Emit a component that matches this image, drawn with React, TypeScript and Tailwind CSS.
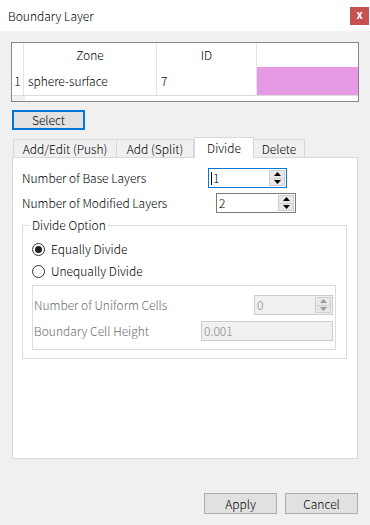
import React from "react";

const font = { fontFamily: '"Noto Sans CJK JP", "Noto Sans", sans-serif' };

function SpinBox({ value, focused, disabled, width }: { value: string; focused?: boolean; disabled?: boolean; width: string }) {
  const border = focused ? "border-[#0078d7]" : disabled ? "border-[#cccccc]" : "border-[#7a7a7a]";
  const bg = disabled ? "bg-[#f0f0f0] text-[#838383]" : "bg-white text-black";
  const arrow = disabled ? "#9a9a9a" : "#000";
  return (
    <div className={`flex h-[20px] border ${border} ${bg} ${width}`}>
      <div className="flex-1 flex items-center pl-[2px] leading-none">
        {focused && <span className="w-px h-[13px] bg-black mr-px" />}
        {value}
      </div>
      <div className="w-[16px] my-px mr-px flex flex-col border border-[#cfcfcf] bg-[#e8e8e8]">
        <div className="flex-1 flex items-center justify-center border-b border-[#cfcfcf]">
          <svg width="7" height="4" viewBox="0 0 7 4"><path d="M0 4 L3.5 0 L7 4 Z" fill={arrow} /></svg>
        </div>
        <div className="flex-1 flex items-center justify-center">
          <svg width="7" height="4" viewBox="0 0 7 4"><path d="M0 0 L3.5 4 L7 0 Z" fill={arrow} /></svg>
        </div>
      </div>
    </div>
  );
}

function Radio({ checked, label }: { checked?: boolean; label: string }) {
  return (
    <div className="flex items-center h-[22px] pl-[9px]">
      <div className="w-[13px] h-[13px] rounded-full border border-[#333] bg-white flex items-center justify-center">
        {checked && <div className="w-[7px] h-[7px] rounded-full bg-[#222]" />}
      </div>
      <span className="ml-[6px]">{label}</span>
    </div>
  );
}

export default function App() {
  const tabs = [
    { name: "Add/Edit (Push)", w: "w-[104px]" },
    { name: "Add (Split)", w: "w-[78px]" },
    { name: "Divide", w: "w-[60px]", active: true },
    { name: "Delete", w: "w-[52px]" },
  ];

  return (
    <div className="w-[370px] h-[525px] bg-[#f0f0f0] text-[12px] font-light text-black flex flex-col overflow-hidden" style={font}>
      <div className="h-[31px] bg-white flex items-center justify-between pl-[8px] pr-px">
        <span className="text-[12px]">Boundary Layer</span>
        <div className="w-[19px] h-[18px] bg-[#c75050] text-white font-bold text-[11px] flex items-center justify-center leading-none pb-[2px]">
          x
        </div>
      </div>

      <div className="mt-[11px] ml-[11px] w-[348px] h-[60px] border border-[#828790] bg-white flex flex-col">
        <div className="flex h-[24px]">
          <div className="w-[12px] border-r border-[#e5e5e5]" />
          <div className="w-[133px] border-r border-[#e5e5e5] flex items-center justify-center">Zone</div>
          <div className="w-[100px] border-r border-[#e5e5e5] flex items-center justify-center">ID</div>
          <div className="flex-1" />
        </div>
        <div className="flex h-[29px] border-b border-[#dcdcdc]">
          <div className="w-[12px] border-r border-[#e5e5e5] flex items-center justify-center">1</div>
          <div className="w-[133px] border-r border-[#e5e5e5] flex items-center pl-[4px]">sphere-surface</div>
          <div className="w-[100px] border-r border-[#e5e5e5] flex items-center pl-[4px]">7</div>
          <div className="flex-1 bg-[#e59ae3]" />
        </div>
        <div className="flex flex-1">
          <div className="w-[13px] bg-[#f0f0f0]" />
        </div>
      </div>

      <button className="mt-[8px] ml-[12px] w-[73px] h-[20px] border-2 border-[#0078d7] bg-[#e1e1e1] flex items-center justify-center leading-none">
        Select
      </button>

      <div className="mt-[8px] ml-[13px] flex items-end h-[19px]">
        {tabs.map((t) =>
          t.active ? (
            <div key={t.name} className={`${t.w} h-[21px] -mb-px bg-white border border-b-0 border-[#d9d9d9] flex items-center justify-center relative z-10`}>
              {t.name}
            </div>
          ) : (
            <div key={t.name} className={`${t.w} h-[18px] bg-[#f0f0f0] border border-b-0 border-[#d9d9d9] -ml-px first:ml-0 flex items-center justify-center`}>
              {t.name}
            </div>
          )
        )}
      </div>

      <div className="ml-[12px] w-[346px] h-[302px] bg-white border border-[#d9d9d9] flex flex-col">
        <div className="mt-[10px] flex items-center h-[20px]">
          <span className="w-[195px] pl-[9px]">Number of Base Layers</span>
          <SpinBox value="1" focused width="w-[79px]" />
        </div>
        <div className="mt-[5px] flex items-center h-[20px]">
          <span className="w-[203px] pl-[9px]">Number of Modified Layers</span>
          <SpinBox value="2" width="w-[80px]" />
        </div>

        <fieldset className="mt-[4px] ml-[9px] w-[325px] h-[142px] border border-[#dcdcdc] pb-[8px]">
          <legend className="ml-[7px] px-[2px] leading-[16px]">Divide Option</legend>
          <div className="mt-[5px]">
            <Radio checked label="Equally Divide" />
            <Radio label="Unequally Divide" />
          </div>
          <div className="mt-[3px] ml-[9px] w-[304px] h-[65px] border border-[#dcdcdc] text-[#6d6d6d] flex flex-col">
            <div className="mt-[9px] flex items-center h-[20px]">
              <span className="w-[221px] pl-[1px]">Number of Uniform Cells</span>
              <SpinBox value="0" disabled width="w-[79px]" />
            </div>
            <div className="mt-[6px] flex items-center h-[20px]">
              <span className="w-[168px] pl-[1px]">Boundary Cell Height</span>
              <div className="w-[132px] h-[20px] border border-[#cccccc] bg-[#f0f0f0] text-[#838383] flex items-center pl-[2px]">
                0.001
              </div>
            </div>
          </div>
        </fieldset>
      </div>

      <div className="mt-[34px] flex justify-end gap-[8px] pr-[12px]">
        <button className="w-[73px] h-[21px] border border-[#adadad] bg-[#e1e1e1] flex items-center justify-center leading-none">Apply</button>
        <button className="w-[73px] h-[21px] border border-[#adadad] bg-[#e1e1e1] flex items-center justify-center leading-none">Cancel</button>
      </div>
    </div>
  );
}
